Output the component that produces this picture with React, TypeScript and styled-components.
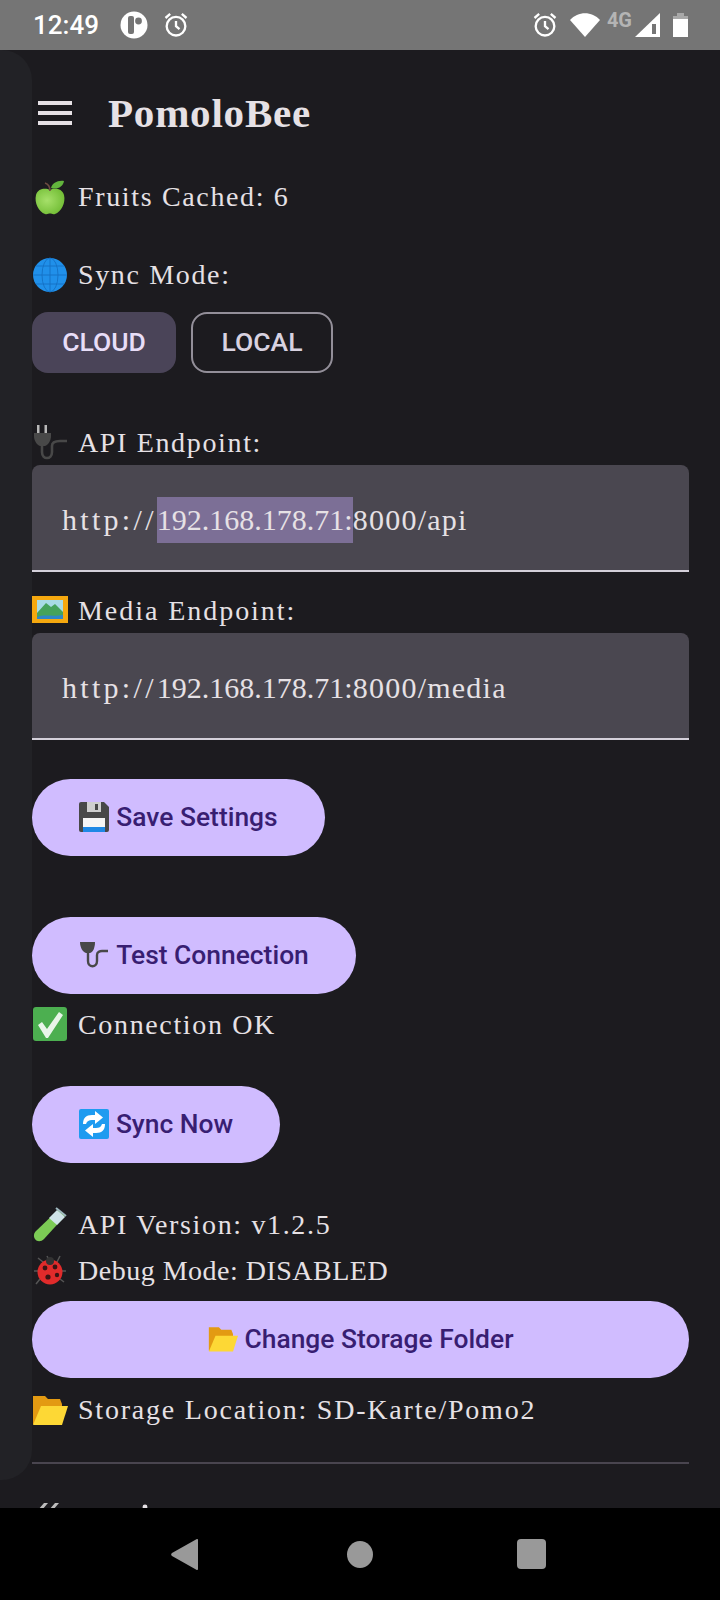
import { ReactNode } from "react";
import styled, { createGlobalStyle } from "styled-components";

const GlobalStyle = createGlobalStyle`
  html, body {
    margin: 0;
    padding: 0;
    background: #000;
  }
`;

const Screen = styled.div`
  position: relative;
  width: 720px;
  height: 1600px;
  display: flex;
  flex-direction: column;
  overflow: hidden;
  background: #1c1b1f;
  color: #e6e1e5;
  font-family: "Liberation Serif", serif;
`;

const StatusBar = styled.div`
  flex: 0 0 50px;
  display: flex;
  align-items: center;
  justify-content: space-between;
  padding: 0 32px 0 33px;
  background: #757575;
  color: #fff;
`;

const StatusGroup = styled.div`
  display: flex;
  align-items: center;
`;

const Clock = styled.span`
  font-family: Roboto, sans-serif;
  font-size: 26px;
  font-weight: 500;
  margin-right: 21px;
`;

const FourG = styled.span`
  font-family: Roboto, sans-serif;
  font-size: 20px;
  font-weight: 700;
  color: #b4b4b4;
  margin: -10px 3px 0 0;
`;

const Body = styled.div`
  flex: 1;
  min-height: 0;
  overflow: hidden;
  padding: 0 31px 0 32px;
`;

const Drawer = styled.div`
  position: absolute;
  left: 0;
  top: 50px;
  width: 32px;
  height: 1430px;
  background: #222226;
  border-radius: 0 30px 30px 0;
`;

const Header = styled.div`
  height: 126px;
  display: flex;
  align-items: center;
  gap: 36px;
  padding-left: 6px;
`;

const Burger = styled.div`
  width: 34px;
  height: 24px;
  display: flex;
  flex-direction: column;
  justify-content: space-between;
  span {
    display: block;
    height: 4px;
    background: #e6e1e5;
  }
`;

const Title = styled.h1`
  margin: 0;
  font-size: 41px;
  font-weight: 700;
  letter-spacing: 0.8px;
`;

const Line = styled.div<{ $top?: number; $spacing?: number }>`
  height: 36px;
  margin-top: ${(p) => p.$top ?? 0}px;
  display: flex;
  align-items: center;
  gap: 10px;
  font-size: 28px;
  letter-spacing: ${(p) => p.$spacing ?? 1.65}px;
  white-space: nowrap;
`;

const Toggles = styled.div`
  display: flex;
  gap: 15px;
  margin-top: 19px;
`;

const Toggle = styled.div<{ $active?: boolean }>`
  box-sizing: border-box;
  height: 61px;
  width: ${(p) => (p.$active ? 144 : 142)}px;
  display: flex;
  align-items: center;
  justify-content: center;
  padding-bottom: 2px;
  border-radius: 16px;
  border: ${(p) => (p.$active ? "none" : "2px solid #938f99")};
  background: ${(p) => (p.$active ? "#4a4458" : "transparent")};
  color: ${(p) => (p.$active ? "#e8def8" : "#d8d2e0")};
  font-family: Roboto, sans-serif;
  font-size: 26.5px;
  font-weight: 500;
`;

const Field = styled.div<{ $bottom: number }>`
  box-sizing: border-box;
  height: 107px;
  margin-top: 4px;
  margin-bottom: ${(p) => p.$bottom}px;
  display: flex;
  align-items: center;
  padding: 4px 0 0 30px;
  background: #4a4750;
  border-radius: 8px 8px 0 0;
  border-bottom: 2px solid #d4d0da;
  font-size: 30px;
  letter-spacing: 1.25px;
  white-space: nowrap;
`;

const Protocol = styled.span`
  letter-spacing: 3.3px;
`;

const Host = styled.span<{ $selected?: boolean }>`
  display: inline-block;
  height: 46px;
  line-height: 46px;
  letter-spacing: 0;
  background: ${(p) => (p.$selected ? "#7c6f96" : "transparent")};
`;

const Pill = styled.div<{ $width: string; $top?: number }>`
  box-sizing: border-box;
  width: ${(p) => p.$width};
  height: 77px;
  margin-top: ${(p) => p.$top ?? 0}px;
  display: flex;
  align-items: center;
  justify-content: center;
  gap: 7px;
  padding-bottom: 2px;
  border-radius: 39px;
  background: #d0bcff;
  color: #381e72;
  font-family: Roboto, sans-serif;
  font-size: 26.4px;
  font-weight: 500;
  white-space: nowrap;
`;

const Divider = styled.div`
  height: 2px;
  margin-top: 34px;
  background: #49454f;
`;

const CutOffRow = styled.div`
  margin-top: 36px;
  padding-left: 6px;
  height: 12px;
`;

const NavBar = styled.div`
  flex: 0 0 92px;
  position: relative;
  z-index: 1;
  display: flex;
  align-items: center;
  gap: 149px;
  padding-left: 171px;
  background: #000;
  svg:last-child {
    margin-left: -5px;
  }
`;

const Emoji = ({ children }: { children: ReactNode }) => (
  <svg width="36" height="36" viewBox="0 0 36 36" style={{ flex: "none" }}>
    {children}
  </svg>
);

const AppleIcon = () => (
  <Emoji>
    <defs>
      <radialGradient id="apple" cx="0.4" cy="0.45" r="0.7">
        <stop offset="0" stopColor="#a6e06a" />
        <stop offset="1" stopColor="#6cb92f" />
      </radialGradient>
    </defs>
    <path d="M18 11c-4-2-12-2-14 5-2 8 3 17 9 19 2 .6 3.500-.4 5-.4s3 1 5 .4c6-2 11-11 9-19-2-7-10-7-14-5z" fill="url(#apple)" />
    <path d="M13 4c3 1 5 3 5 8" stroke="#6d4c41" strokeWidth="1.6" fill="none" />
    <path d="M19 9c1-5 7-8 13-7-1 6-7 9-13 7z" fill="#62b43d" />
  </Emoji>
);

const GlobeIcon = () => (
  <Emoji>
    <circle cx="18" cy="18" r="17" fill="#2090ea" />
    <g stroke="#1470c4" strokeWidth="0.9" fill="none">
      <ellipse cx="18" cy="18" rx="8" ry="17" />
      <path d="M18 1v34M1 18h34M4 9h28M4 27h28" />
    </g>
  </Emoji>
);

const PlugIcon = () => (
  <Emoji>
    <path d="M5 0h2.500v8H5zM12.500 0H15v8h-2.500z" fill="#b8b8b8" />
    <path d="M2 8h17v3c0 5-3 9-6 10H8c-3-1-6-5-6-10z" fill="#484848" />
    <path d="M10 20v7c0 8 10 8 10 0v-6c0-4 4-5 8-5h7" stroke="#484848" strokeWidth="2.600" fill="none" />
  </Emoji>
);

const PictureIcon = () => (
  <Emoji>
    <rect x="0" y="3" width="36" height="27" fill="#f5a80f" />
    <rect x="5" y="7" width="26" height="19" fill="#a8dbe6" />
    <path d="M5 20l9-10 5 4 4-3 8 8v7H5z" fill="#45a35c" />
    <path d="M5 24c8-3 14 0 26-2v4H5z" fill="#2f87c8" />
  </Emoji>
);

const FloppyIcon = () => (
  <svg width="30" height="30" viewBox="0 0 30 30">
    <path d="M0 2a2 2 0 0 1 2-2h23l5 5v23a2 2 0 0 1-2 2H2a2 2 0 0 1-2-2z" fill="#484848" />
    <rect x="8" y="0" width="14" height="10" fill="#cfcfcf" />
    <rect x="16" y="2" width="3" height="6" fill="#484848" />
    <rect x="4" y="16" width="22" height="14" fill="#f5f5f5" />
    <rect x="4" y="25" width="22" height="5" fill="#1e88e5" />
  </svg>
);

const SmallPlugIcon = () => (
  <svg width="30" height="30" viewBox="0 0 30 30">
    <path d="M1 2h15c0 6-2 10-5 11H7C4 12 1 8 1 2z" fill="#484848" />
    <path d="M9 12v9c0 7 9 7 9 0v-6c0-3 3-4 5-4h6" stroke="#484848" strokeWidth="2.400" fill="none" />
  </svg>
);

const CheckIcon = () => (
  <Emoji>
    <rect x="1" y="0" width="34" height="34" rx="3" fill="#4caf50" />
    <path d="M6 18l4-3 5 7L27 5l4 3-15 23h-2z" fill="#e8f5e9" />
  </Emoji>
);

const SyncIcon = () => (
  <svg width="30" height="30" viewBox="0 0 30 30">
    <rect width="30" height="30" rx="2" fill="#1e9bf0" />
    <path d="M4 15c0-6 3-9 9-9h3V2l8 6.500-8 6.500v-4h-3c-3 0-5 1-6 4z" fill="#fff" />
    <path d="M26 15c0 6-3 9-9 9h-3v4l-8-6.500L14 15v4h3c3 0 5-1 6-4z" fill="#fff" />
  </svg>
);

const TubeIcon = () => (
  <Emoji>
    <path d="M26 3l7 6L12 32c-3 3-7 3-9 0s-1-6 1-8z" fill="#7ccb55" />
    <path d="M25 3l8 7-8 8-8-7z" fill="#cfe3e8" />
    <path d="M24 1l10 8" stroke="#9fb8c0" strokeWidth="2" />
  </Emoji>
);

const BugIcon = () => (
  <Emoji>
    <g stroke="#555" strokeWidth="1.500" fill="none">
      <path d="M11 9L6 5M25 9l3-6M6 18H2M30 18h4M8 26l-4 5M28 26l4 3M17 7l-2-4" />
    </g>
    <circle cx="18" cy="19" r="12.500" fill="#e02b2b" />
    <circle cx="18" cy="8" r="4" fill="#333" />
    <g fill="#3a1414">
      <circle cx="13" cy="15" r="2.400" />
      <circle cx="23" cy="14" r="2.400" />
      <circle cx="25" cy="22" r="2.200" />
      <circle cx="16" cy="24" r="2.600" />
    </g>
  </Emoji>
);

const FolderIcon = ({ size }: { size: number }) => (
  <svg width={size} height={size} viewBox="0 0 36 36" style={{ flex: "none" }}>
    <path d="M1 4h12l3 3h12l2 5v20H1z" fill="#e39a12" />
    <path d="M9 14h27l-6 19H1z" fill="#fdd835" />
  </svg>
);

const ClockGlyph = ({ size }: { size: number }) => (
  <svg width={size} height={size} viewBox="0 0 24 24" fill="none" stroke="#fff" strokeWidth="2">
    <circle cx="12" cy="13" r="8" />
    <path d="M12 8.500V13l3 2.500M3 6l4-3.500M21 6l-4-3.500" />
  </svg>
);

export default function App() {
  return (
    <Screen>
      <GlobalStyle />
      <StatusBar>
        <StatusGroup>
          <Clock>12:49</Clock>
          <svg width="28" height="28" viewBox="0 0 28 28" style={{ marginRight: 14 }}>
            <circle cx="14" cy="14" r="13.500" fill="#fff" />
            <rect x="8" y="5" width="6" height="18" rx="2" fill="#757575" />
            <circle cx="18.500" cy="10" r="3.400" fill="#757575" />
          </svg>
          <ClockGlyph size={28} />
        </StatusGroup>
        <StatusGroup>
          <ClockGlyph size={28} />
          <svg width="30" height="24" viewBox="0 0 30 24" style={{ margin: "0 7px 0 11px" }}>
            <path d="M0 7C8-2 22-2 30 7L15 24z" fill="#fff" />
          </svg>
          <FourG>4G</FourG>
          <svg width="25" height="24" viewBox="0 0 25 24" style={{ marginRight: 13 }}>
            <path d="M0 24L25 0v24z" fill="#fff" />
            <path d="M17 11h4v10h-4z" fill="#757575" />
          </svg>
          <svg width="15" height="24" viewBox="0 0 15 24">
            <path d="M4 0h7v3H4z" fill="#a8a8a8" />
            <path d="M0 3h15v3H0z" fill="#a8a8a8" />
            <path d="M0 6h15v18H0z" fill="#fff" />
          </svg>
        </StatusGroup>
      </StatusBar>

      <Drawer />

      <Body>
        <Header>
          <Burger>
            <span />
            <span />
            <span />
          </Burger>
          <Title>PomoloBee</Title>
        </Header>
        <Line $top={3}>
          <AppleIcon />
          Fruits Cached: 6
        </Line>
        <Line $top={42}>
          <GlobeIcon />
          Sync Mode:
        </Line>
        <Toggles>
          <Toggle $active>CLOUD</Toggle>
          <Toggle>LOCAL</Toggle>
        </Toggles>
        <Line $top={52}>
          <PlugIcon />
          API Endpoint:
        </Line>
        <Field $bottom={21}>
          <Protocol>http://</Protocol>
          <Host $selected>192.168.178.71:</Host>8000/api
        </Field>
        <Line $spacing={1.95}>
          <PictureIcon />
          Media Endpoint:
        </Line>
        <Field $bottom={39}>
          <Protocol>http://</Protocol>
          <Host>192.168.178.71:</Host>8000/media
        </Field>
        <Pill $width="293px">
          <FloppyIcon />
          Save Settings
        </Pill>
        <Pill $width="324px" $top={61}>
          <SmallPlugIcon />
          Test Connection
        </Pill>
        <Line $top={13}>
          <CheckIcon />
          Connection OK
        </Line>
        <Pill $width="248px" $top={43}>
          <SyncIcon />
          Sync Now
        </Pill>
        <Line $top={44}>
          <TubeIcon />
          API Version: v1.2.5
        </Line>
        <Line $top={10} $spacing={0.5}>
          <BugIcon />
          Debug Mode: DISABLED
        </Line>
        <Pill $width="100%" $top={12}>
          <FolderIcon size={30} />
          Change Storage Folder
        </Pill>
        <Line $top={14} $spacing={1.78}>
          <FolderIcon size={36} />
          Storage Location: SD-Karte/Pomo2
        </Line>
        <Divider />
        <CutOffRow>
          <svg width="112" height="12" viewBox="0 0 112 12">
            <path d="M0 8l6-7h4L4 8zM11 8l6-7h4l-6 7z" fill="#bdbdbd" />
            <circle cx="107" cy="5" r="2.400" fill="#e6e1e5" />
          </svg>
        </CutOffRow>
      </Body>

      <NavBar>
        <svg width="27" height="31" viewBox="0 0 27 31">
          <path d="M27 1v29a1 1 0 0 1-1.600.8L1 17a2 2 0 0 1 0-3L25.400.2A1 1 0 0 1 27 1z" fill="#999" />
        </svg>
        <svg width="26" height="27" viewBox="0 0 26 27">
          <ellipse cx="13" cy="13.500" rx="13" ry="13.500" fill="#999" />
        </svg>
        <svg width="29" height="30" viewBox="0 0 29 30">
          <rect width="29" height="30" rx="4" fill="#999" />
        </svg>
      </NavBar>
    </Screen>
  );
}
